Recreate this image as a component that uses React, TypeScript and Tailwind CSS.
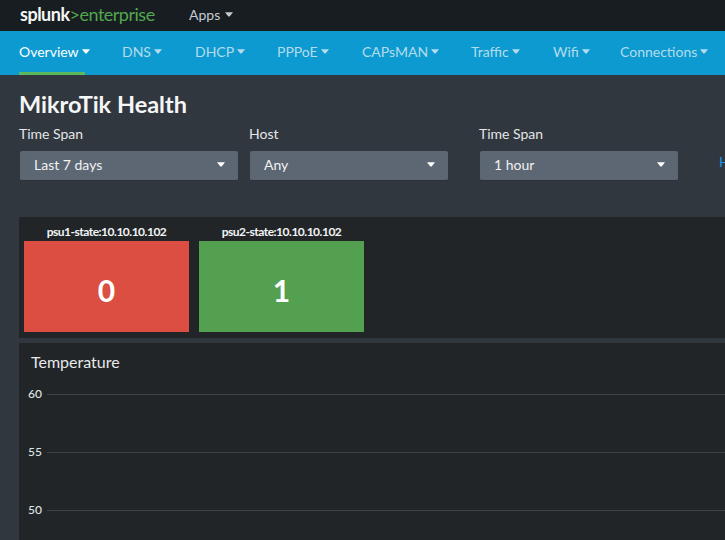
const font = { fontFamily: '"Lato", "Liberation Sans", sans-serif' };

function Caret({ className }: { className: string }) {
  return (
    <svg viewBox="0 0 8 5" className={className} aria-hidden="true">
      <path d="M0 0.2 H8 L4.6 4.6 H3.4 Z" fill="currentColor" />
    </svg>
  );
}

const tabs = [
  { label: "Overview", w: "w-[66px]", mr: "mr-[37px]", active: true },
  { label: "DNS", w: "w-[38px]", mr: "mr-[35px]" },
  { label: "DHCP", w: "w-[47px]", mr: "mr-[35px]" },
  { label: "PPPoE", w: "w-[51px]", mr: "mr-[34px]" },
  { label: "CAPsMAN", w: "w-[74px]", mr: "mr-[35px]" },
  { label: "Traffic", w: "w-[46px]", mr: "mr-[36px]" },
  { label: "Wifi", w: "w-[33px]", mr: "mr-[34px]" },
  { label: "Connections", w: "w-[88px]", mr: "" },
];

function Filter({ label, value, width, mr }: { label: string; value: string; width: string; mr: string }) {
  return (
    <div className={`${width} ${mr} shrink-0`}>
      <div className="-ml-px h-[20px] text-[14px] leading-[20px] text-[#e4e6e8]">{label}</div>
      <div className="mt-[7px] flex h-[30px] items-center justify-between rounded-[2px] border-b border-[#2b3036] bg-[#5c6773] pb-[2px] pl-[14px] pr-[13px] text-[14px] text-[#f0f2f3]">
        <span>{value}</span>
        <Caret className="h-[5px] w-[8px] text-white" />
      </div>
    </div>
  );
}

function Tile({ title, value, color, mr }: { title: string; value: string; color: string; mr: string }) {
  return (
    <div className={`w-[165px] ${mr} shrink-0`}>
      <div className="h-[19px] whitespace-nowrap text-center text-[12px] font-bold leading-[19px] tracking-[-0.5px] text-[#f2f4f5]">
        {title}
      </div>
      <div className={`${color} flex h-[91px] items-center justify-center pt-[8px] text-[30px] font-bold text-white`}>{value}</div>
    </div>
  );
}

function GridRow({ label, mb }: { label: string; mb: string }) {
  return (
    <div className={`flex h-[16px] items-center ${mb}`}>
      <span className="w-[28px] pl-[9px] text-[12px] font-medium text-[#dfe3e6]">{label}</span>
      <div className="h-px flex-1 bg-[#3c4347]" />
    </div>
  );
}

export default function App() {
  return (
    <div style={font} className="flex h-[540px] w-[725px] flex-col overflow-hidden bg-[#31373e]">
      <header className="flex h-[31px] shrink-0 items-center bg-[#171d21] pb-[3px] pl-[20px]">
        <div className="flex w-[169px] items-baseline text-[18px] leading-none tracking-[-0.5px]">
          <span className="font-bold text-[#f4f5f5]">splunk</span>
          <span className="font-normal text-[#53a74f]">&gt;enterprise</span>
        </div>
        <div className="flex items-center gap-[5px] text-[14px] text-[#c3cbd4]">
          Apps
          <Caret className="h-[5px] w-[8px]" />
        </div>
      </header>

      <nav className="flex h-[44px] shrink-0 bg-[#0c9ad0] pl-[19px] text-[14px]">
        {tabs.map((t) => (
          <div
            key={t.label}
            className={`${t.w} ${t.mr} flex h-full shrink-0 items-center gap-[3px] whitespace-nowrap border-b-[3px] ${
              t.active ? "border-[#5cb85c] text-white" : "border-transparent text-[#b5dcec]"
            }`}
          >
            {t.label}
            <Caret className="h-[5px] w-[8px] shrink-0" />
          </div>
        ))}
      </nav>

      <main className="flex-1 pl-[19px]">
        <h1 className="pt-[14px] text-[23.5px] font-bold leading-[30px] text-[#f5f6f7]">MikroTik Health</h1>
        <div className="mt-[5px] flex pl-px">
          <Filter label="Time Span" value="Last 7 days" width="w-[218px]" mr="mr-[12px]" />
          <Filter label="Host" value="Any" width="w-[198px]" mr="mr-[32px]" />
          <Filter label="Time Span" value="1 hour" width="w-[198px]" mr="mr-[41px]" />
          <span className="mt-[27px] whitespace-nowrap text-[14px] leading-[22px] text-[#1e93e6]">Hide Filters</span>
        </div>

        <section className="mt-[36px] flex h-[121px] bg-[#212527] pl-[5px] pt-[5px]">
          <Tile title="psu1-state:10.10.10.102" value="0" color="bg-[#dc4e41]" mr="mr-[10px]" />
          <Tile title="psu2-state:10.10.10.102" value="1" color="bg-[#53a051]" mr="" />
        </section>

        <section className="mt-[5px] h-[197px] bg-[#212527]">
          <h2 className="pl-[12px] pt-[9px] text-[16px] leading-[20px] text-[#e7e9eb]">Temperature</h2>
          <div className="mt-[14px]">
            <GridRow label="60" mb="mb-[42px]" />
            <GridRow label="55" mb="mb-[42px]" />
            <GridRow label="50" mb="" />
          </div>
        </section>
      </main>
    </div>
  );
}
